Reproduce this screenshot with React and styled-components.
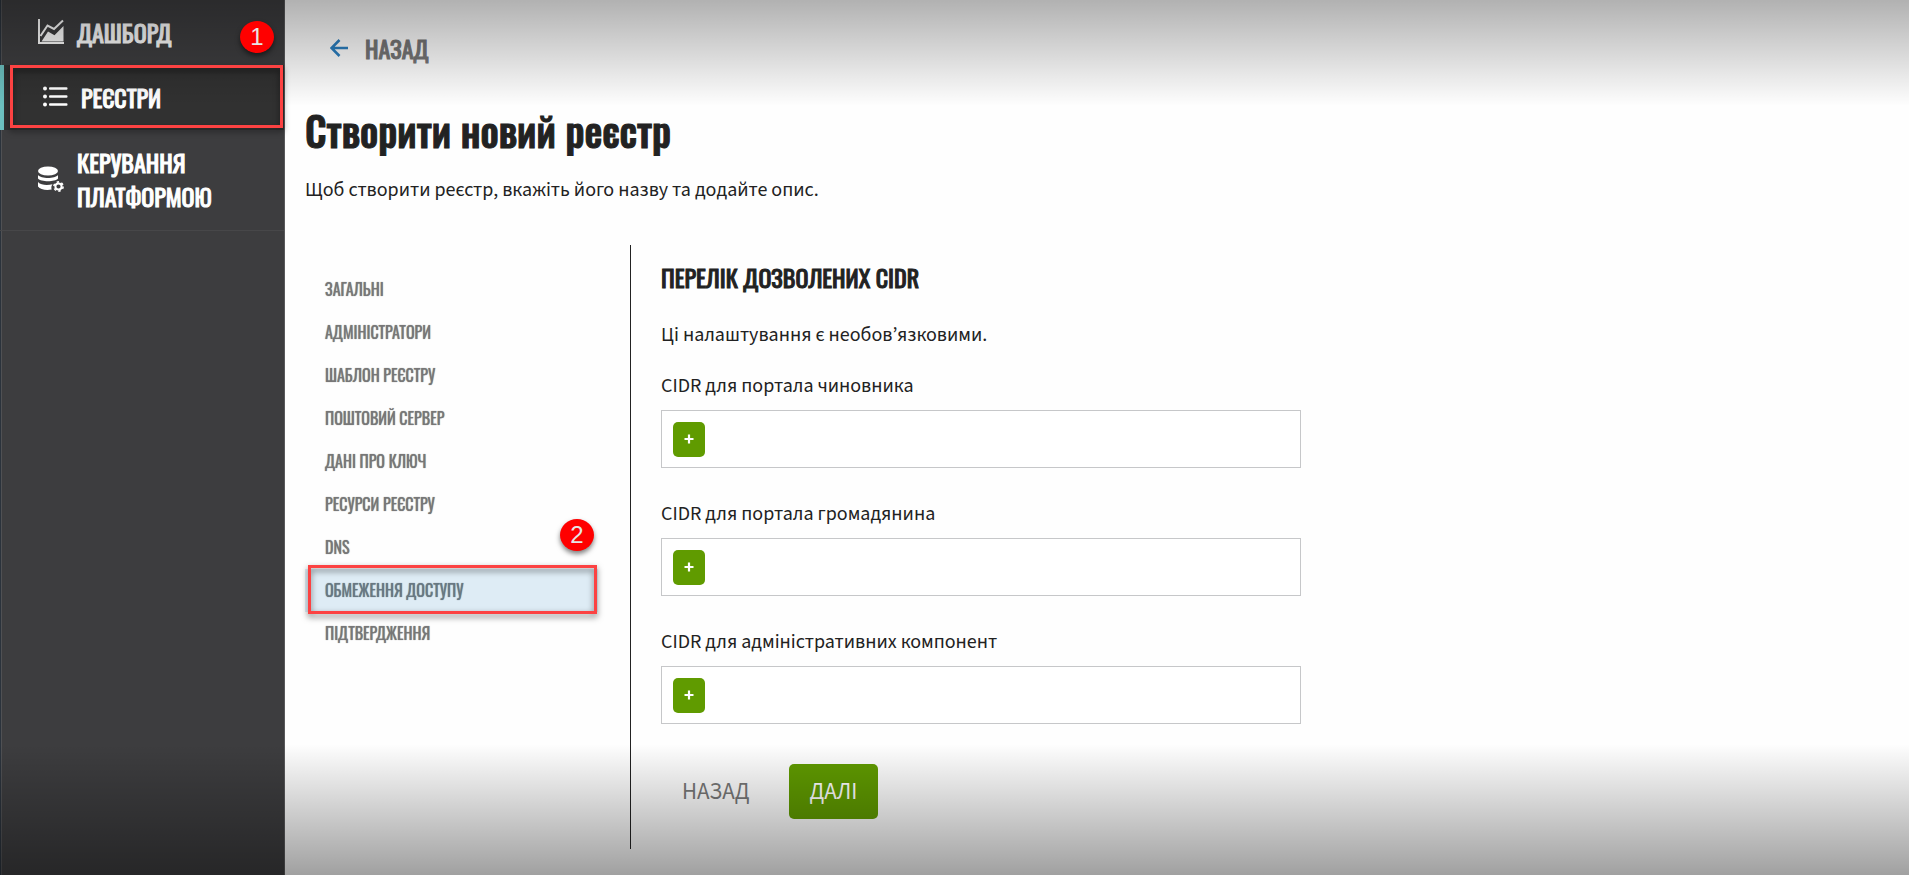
import React from "react";
import styled, { createGlobalStyle, css } from "styled-components";

const display = `Oswald, "Liberation Sans Narrow", "Open Sans Condensed", "DejaVu Sans Condensed", sans-serif`;
const text = `"Source Sans Pro", "Source Sans 3", "Noto Sans", sans-serif`;

const GlobalStyle = createGlobalStyle`
  *, *::before, *::after { box-sizing: border-box; }
  body {
    margin: 0;
    background: #fefefe;
    color: #222;
    font-family: ${text};
    font-size: 20px;
    line-height: 28px;
  }
`;

const heavyDisplay = css`
  font-family: ${display};
  font-weight: 400;
  -webkit-text-stroke: 1px currentColor;
`;

const Shell = styled.div`
  position: relative;
  display: flex;
  min-height: 100vh;
`;

const Shade = styled.div`
  position: absolute;
  left: 0;
  right: 0;
  z-index: 1;
  pointer-events: none;
  ${(p) =>
    p.$edge === "top"
      ? css`
          top: 0;
          height: 106px;
          background: linear-gradient(to bottom, rgba(0, 0, 0, 0.3), rgba(0, 0, 0, 0));
        `
      : css`
          bottom: 0;
          height: 131px;
          background: linear-gradient(to top, rgba(0, 0, 0, 0.37), rgba(0, 0, 0, 0));
        `}
`;

const Sidebar = styled.nav`
  flex: 0 0 285px;
  background: linear-gradient(to right, #2b333c 1px, #505154 1px 2px, #3d3d3f 2px);
  border-right: 1px solid #59595b;
`;

const highlight = css`
  &::after {
    content: "";
    position: absolute;
    z-index: 2;
    border: 3px solid #fc4242;
    filter: drop-shadow(0 3px 3px rgba(0, 0, 0, 0.55));
    pointer-events: none;
  }
`;

const SideItem = styled.div`
  position: relative;
  ${(p) =>
    p.$active &&
    css`
      background: #313131;
      border-left: 4px solid #6cc0bf;
      ${highlight}
      &::after {
        inset: 0 1px 2px 6px;
      }
    `}
  ${(p) => p.$divided && "border-bottom: 1px solid #474749;"}
`;

const SideLink = styled.a`
  display: flex;
  align-items: center;
  gap: 12px;
  min-height: 65px;
  padding: ${(p) => (p.$tall ? "15px 24px 17px 38px" : "0 24px 2px 38px")};
  color: #fff;
  ${heavyDisplay}
  font-size: 24px;
  line-height: 34px;
  text-decoration: none;

  svg {
    flex: none;
  }
`;

const Badge = styled.span`
  position: absolute;
  z-index: 3;
  right: ${(p) => p.$right}px;
  top: ${(p) => p.$top}px;
  display: grid;
  place-items: center;
  width: 34px;
  height: 32px;
  border-radius: 50%;
  background: #f00;
  color: #e6e6e6;
  font: 24px/32px "Liberation Sans", sans-serif;
  box-shadow: 0 3px 5px rgba(0, 0, 0, 0.5);
`;

const Main = styled.main`
  flex: 1;
  display: flex;
  flex-direction: column;
  align-items: flex-start;
  min-width: 0;
  padding: 31px 20px 26px;
`;

const BackLink = styled.a`
  display: flex;
  align-items: center;
  gap: 17px;
  margin-left: 25px;
  color: #757575;
  ${heavyDisplay}
  font-size: 24px;
  line-height: 34px;
  text-decoration: none;
`;

const Title = styled.h1`
  margin: 33px 0 0;
  ${heavyDisplay}
  font-size: 40px;
  font-weight: 500;
  line-height: 64px;
`;

const Lead = styled.p`
  margin: 14px 0 41px;
`;

const Columns = styled.div`
  flex: 1;
  display: flex;
  width: 100%;
`;

const Steps = styled.ol`
  flex: 0 0 326px;
  margin: 0;
  padding: 23px 32px 0 0;
  list-style: none;
  border-right: 1px solid #222;
`;

const Step = styled.li`
  position: relative;
  ${(p) =>
    p.$active &&
    css`
      background: #deecf5;
      ${highlight}
      &::after {
        inset: -4px 1px -2px 3px;
      }
    `}
`;

const StepLink = styled.a`
  display: block;
  padding: 0 20px;
  color: ${(p) => (p.$active ? "#687882" : "#777")};
  font-family: ${display};
  font-size: 16px;
  line-height: 43px;
  text-decoration: none;
  text-shadow: 0 0 1px currentColor;
`;

const Panel = styled.form`
  flex: 0 1 670px;
  min-width: 0;
  padding-left: 30px;
`;

const PanelTitle = styled.h2`
  margin: 15px 0 27px;
  ${heavyDisplay}
  font-size: 24px;
  line-height: 34px;
`;

const Note = styled.p`
  margin: 0 0 24px;
`;

const Field = styled.div`
  margin-bottom: 33px;
`;

const FieldLabel = styled.label`
  display: block;
  margin-bottom: 11px;
  line-height: 26px;
`;

const FieldBox = styled.div`
  display: flex;
  align-items: center;
  gap: 12px;
  height: 58px;
  padding: 0 11px;
  background: #fff;
  border: 1px solid #c6c7c9;
`;

const AddButton = styled.button`
  display: grid;
  place-items: center;
  width: 32px;
  height: 35px;
  padding: 0;
  border: 0;
  border-radius: 5px;
  background: #609b00;
  color: #fff;
`;

const FieldInput = styled.input`
  flex: 1;
  min-width: 0;
  border: 0;
  outline: 0;
  background: transparent;
  font: inherit;
`;

const Actions = styled.div`
  display: flex;
  gap: 18px;
  padding-top: 7px;
`;

const ActionButton = styled.button`
  height: 55px;
  padding: 0 21px;
  border: 0;
  border-radius: 5px;
  background: ${(p) => (p.$primary ? "#609b00" : "transparent")};
  color: ${(p) => (p.$primary ? "#fff" : "#777")};
  font-family: ${text};
  font-size: 23px;
`;

const ChartIcon = () => (
  <svg width="27" height="25" viewBox="0 0 27 25" fill="none" aria-hidden="true">
    <path d="M1 0v24h25" stroke="#fff" strokeWidth="2" />
    <path d="M2.500 17 9.500 6.500 16 10 25 1.500" stroke="#fff" strokeWidth="2" />
    <path d="M3.500 22.500 10 12.500l6.500 3.800L25.500 7v15.500Z" fill="#fff" />
  </svg>
);

const ListIcon = () => (
  <svg width="27" height="21" viewBox="0 0 27 21" fill="#fff" aria-hidden="true">
    {[2.5, 10.5, 18.5].map((y) => (
      <g key={y}>
        <circle cx="3" cy={y} r="2" />
        <rect x="7" y={y - 1.3} width="18.500" height="2.600" rx="1" />
      </g>
    ))}
  </svg>
);

const DatabaseGearIcon = () => (
  <svg width="27" height="27" viewBox="0 0 27 27" aria-hidden="true">
    <ellipse cx="10" cy="5" rx="10" ry="4.500" fill="#fff" />
    <path d="M0 9c3 4 17 4 20 0v3.500c-3 3.600-17 3.600-20 0Z" fill="#fff" />
    <path d="M0 16c3 3.500 10 3.600 14.500 2.200-1.200 1.600-1.400 3.600-.8 5.300C8 24.500 2 23.500 0 20.500Z" fill="#fff" />
    <g stroke="#fff" fill="none">
      <circle cx="20.500" cy="20.500" r="3.100" strokeWidth="2" />
      <circle cx="20.500" cy="20.500" r="4.600" strokeWidth="1.600" strokeDasharray="2.400 2.417" />
    </g>
  </svg>
);

const ArrowIcon = () => (
  <svg width="18" height="18" viewBox="0 0 18 18" fill="none" stroke="#2b7fc0" strokeWidth="2.600" aria-hidden="true">
    <path d="M18 9H2M9.500 1 1.500 9l8 8" />
  </svg>
);

const PlusIcon = () => (
  <svg width="10" height="10" viewBox="0 0 10 10" stroke="currentColor" strokeWidth="2.200" aria-hidden="true">
    <path d="M5 .500v9M.500 5h9" />
  </svg>
);

const steps = [
  "ЗАГАЛЬНІ",
  "АДМІНІСТРАТОРИ",
  "ШАБЛОН РЕЄСТРУ",
  "ПОШТОВИЙ СЕРВЕР",
  "ДАНІ ПРО КЛЮЧ",
  "РЕСУРСИ РЕЄСТРУ",
  "DNS",
  "ОБМЕЖЕННЯ ДОСТУПУ",
  "ПІДТВЕРДЖЕННЯ",
];
const activeStep = 7;

const fields = [
  { id: "officer", label: "CIDR для портала чиновника" },
  { id: "citizen", label: "CIDR для портала громадянина" },
  { id: "admin", label: "CIDR для адміністративних компонент" },
];

export default function App() {
  return (
    <>
      <GlobalStyle />
      <Shell>
        <Sidebar>
          <SideItem>
            <SideLink href="#dashboard">
              <ChartIcon />
              ДАШБОРД
            </SideLink>
            <Badge $right={10} $top={21}>1</Badge>
          </SideItem>
          <SideItem $active>
            <SideLink href="#registries" aria-current="page">
              <ListIcon />
              РЕЄСТРИ
            </SideLink>
          </SideItem>
          <SideItem $divided>
            <SideLink href="#platform" $tall>
              <DatabaseGearIcon />
              КЕРУВАННЯ ПЛАТФОРМОЮ
            </SideLink>
          </SideItem>
        </Sidebar>

        <Main>
          <BackLink href="#back">
            <ArrowIcon />
            НАЗАД
          </BackLink>
          <Title>Створити новий реєстр</Title>
          <Lead>Щоб створити реєстр, вкажіть його назву та додайте опис.</Lead>

          <Columns>
            <Steps>
              {steps.map((label, i) => (
                <Step key={label} $active={i === activeStep}>
                  <StepLink
                    href={`#step-${i + 1}`}
                    $active={i === activeStep}
                    aria-current={i === activeStep ? "step" : undefined}
                  >
                    {label}
                  </StepLink>
                  {i === activeStep && <Badge $right={4} $top={-50}>2</Badge>}
                </Step>
              ))}
            </Steps>

            <Panel onSubmit={(e) => e.preventDefault()}>
              <PanelTitle>ПЕРЕЛІК ДОЗВОЛЕНИХ CIDR</PanelTitle>
              <Note>Ці налаштування є необов’язковими.</Note>
              {fields.map(({ id, label }) => (
                <Field key={id}>
                  <FieldLabel htmlFor={id}>{label}</FieldLabel>
                  <FieldBox>
                    <AddButton type="button" aria-label="Додати CIDR">
                      <PlusIcon />
                    </AddButton>
                    <FieldInput id={id} type="text" />
                  </FieldBox>
                </Field>
              ))}
              <Actions>
                <ActionButton type="button">НАЗАД</ActionButton>
                <ActionButton type="submit" $primary>ДАЛІ</ActionButton>
              </Actions>
            </Panel>
          </Columns>
        </Main>
        <Shade $edge="top" />
        <Shade $edge="bottom" />
      </Shell>
    </>
  );
}
